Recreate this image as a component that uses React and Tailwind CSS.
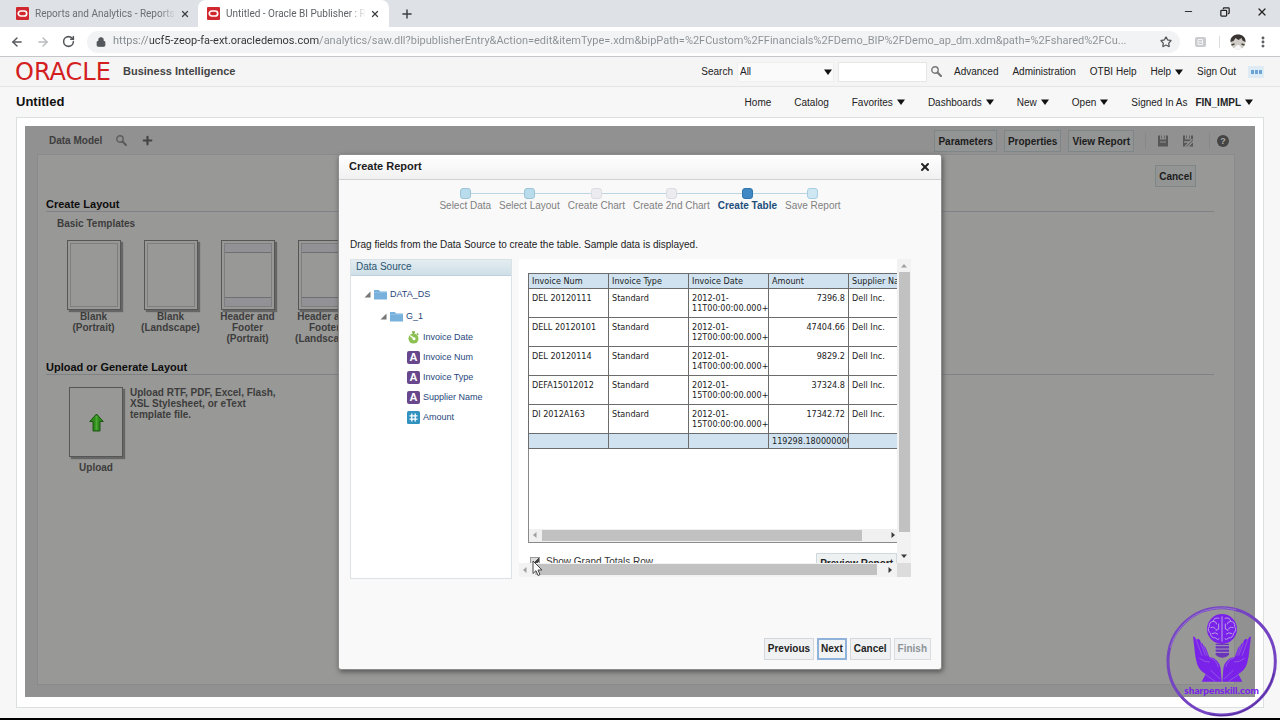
import React from "react";
import { ArrowLeft, ArrowRight, RotateCw, Lock, Star, X, Plus, Minus, Copy, MoreVertical } from "lucide-react";

const URL_TEXT =
  "https://ucf5-zeop-fa-ext.oracledemos.com/analytics/saw.dll?bipublisherEntry&Action=edit&itemType=.xdm&bipPath=%2FCustom%2FFinancials%2FDemo_BIP%2FDemo_ap_dm.xdm&path=%2Fshared%2FCu...";

const ROWS = [
  ["DEL 20120111", "Standard", "2012-01-11T00:00:00.000+0", "7396.8", "Dell Inc."],
  ["DELL 20120101", "Standard", "2012-01-12T00:00:00.000+0", "47404.66", "Dell Inc."],
  ["DEL 20120114", "Standard", "2012-01-14T00:00:00.000+0", "9829.2", "Dell Inc."],
  ["DEFA15012012", "Standard", "2012-01-15T00:00:00.000+0", "37324.8", "Dell Inc."],
  ["DI 2012A163", "Standard", "2012-01-15T00:00:00.000+0", "17342.72", "Dell Inc."],
];

const STEPS = [
  ["Select Data", "done"],
  ["Select Layout", "done"],
  ["Create Chart", "idle"],
  ["Create 2nd Chart", "idle"],
  ["Create Table", "current"],
  ["Save Report", "next"],
];

const NODE = {
  done: "border-[#9cc4d8] bg-[#b9dcec]",
  idle: "border-[#dcdce2] bg-[#ececf0]",
  current: "border-[#2f74ac] bg-[#3f88c3]",
  next: "border-[#a9cfe4] bg-[#cfe6f3]",
};

function Favicon() {
  return (
    <svg className="h-[13px] w-[13px] shrink-0" viewBox="0 0 13 13" aria-hidden="true">
      <rect width="13" height="13" rx="1" fill="#d0282e" />
      <rect x="2.3" y="4" width="8.4" height="5" rx="2.5" fill="none" stroke="#fff" strokeWidth="1.7" />
    </svg>
  );
}

function Tab({ title, active }) {
  return (
    <div
      className={
        active
          ? "flex h-[27px] w-[191px] items-center rounded-t-lg bg-white px-[9px] text-[#5f6368]"
          : "flex h-[27px] w-[198px] items-center pl-4 pr-2 text-[#6b6f75]"
      }
    >
      <Favicon />
      <span className="ml-[6px] min-w-0 flex-1 overflow-hidden whitespace-nowrap [mask-image:linear-gradient(90deg,#000_88%,transparent)]">
        {title}
      </span>
      <button aria-label="Close tab" className="ml-1">
        <X className="h-[10px] w-[10px] text-[#3c4043]" strokeWidth={3} />
      </button>
    </div>
  );
}

function Magnifier() {
  return (
    <svg className="h-[11px] w-[11px]" viewBox="0 0 11 11" fill="none" stroke="currentColor" aria-hidden="true">
      <circle cx="4" cy="4" r="3.2" strokeWidth="1.4" />
      <path d="M6.500 6.500L10 10" strokeWidth="2.200" strokeLinecap="round" />
    </svg>
  );
}

function Caret() {
  return (
    <svg className="h-[6px] w-2 shrink-0" viewBox="0 0 8 6" aria-hidden="true">
      <path d="M0 0.500h8L4 6z" fill="#111" />
    </svg>
  );
}

function NavMenu({ label, bold }) {
  return (
    <button className={bold ? "flex items-center gap-1 font-bold" : "flex items-center gap-1"}>
      {label}
      <Caret />
    </button>
  );
}

function DarkButton({ children }) {
  return (
    <button className="h-[22px] border border-[#7f8688] bg-[#939494] px-[3px] font-bold text-[#1c1c1c]">{children}</button>
  );
}

function Template({ lines, banded }) {
  return (
    <button className="flex w-[77px] shrink-0 flex-col items-center gap-[1px] font-bold leading-[11px] text-[#3d3d3d]">
      <span className="flex h-[70px] w-[54px] border border-[#565656] p-[2px] shadow-[2px_2px_1px_#666]">
        <span className="flex flex-1 flex-col justify-between border border-[#7e7e7e]">
          {banded && <span className="h-[9px] border-b border-[#6d6d72] bg-[#929296]" />}
          {banded && <span className="h-[9px] border-t border-[#6d6d72] bg-[#929296]" />}
        </span>
      </span>
      <span>
        {lines.map((l) => (
          <span key={l} className="block whitespace-nowrap">
            {l}
          </span>
        ))}
      </span>
    </button>
  );
}

function SaveIcon({ edit }) {
  return (
    <svg className="h-3 w-3" viewBox="0 0 12 12" aria-hidden="true">
      <path d="M1 0.500h2v4h6v-4h2V11.500H1z" fill="#565656" />
      <path d="M4 0.500h1v3H4zM7 0.500h1v3H7z" fill="#666" />
      {edit ? (
        <path d="M3 11.500L10.500 4M5.500 12L12 5.500M2 7h5" stroke="#929292" strokeWidth="1.300" />
      ) : (
        <path d="M3 7h6" stroke="#929292" strokeWidth="1" />
      )}
    </svg>
  );
}

function Folder() {
  return (
    <svg className="h-[11px] w-[13px] shrink-0" viewBox="0 0 13 11" aria-hidden="true">
      <path d="M0 1h5l1 1.500h7V10.500H0z" fill="#78b1dc" />
      <path d="M0 3.500h13" stroke="#8fc0e6" strokeWidth="0.800" />
    </svg>
  );
}

function Twisty() {
  return (
    <svg className="h-[7px] w-[7px] shrink-0" viewBox="0 0 7 7" aria-hidden="true">
      <path d="M6.500 0.500v6h-6z" fill="#777" />
    </svg>
  );
}

function FieldIcon({ kind }) {
  if (kind === "date")
    return (
      <svg className="h-[13px] w-[13px] shrink-0" viewBox="0 0 13 13" aria-hidden="true">
        <circle cx="6.500" cy="7.600" r="5" fill="#8cc152" />
        <path d="M5 0.300h3v1.400H7.200v1.300H5.800V1.700H5zM10.400 1.900l1.400 1.300-1 1.100-1.400-1.300z" fill="#7cb043" />
        <path d="M3.800 5l3 2.500" stroke="#fff" strokeWidth="1.500" strokeLinecap="round" />
        <circle cx="7" cy="7.800" r="1.500" fill="#fff" />
      </svg>
    );
  if (kind === "num")
    return (
      <svg className="h-[13px] w-[13px] shrink-0" viewBox="0 0 13 13" aria-hidden="true">
        <rect width="13" height="13" rx="1.500" fill="#3292bf" />
        <path d="M4.800 2.500v8M8.200 2.500v8M2.500 4.800h8M2.500 8.200h8" stroke="#fff" strokeWidth="1.300" />
      </svg>
    );
  return (
    <span className="flex h-[13px] w-[13px] shrink-0 items-center justify-center rounded-[2px] bg-[#68478c] text-[11px] font-bold leading-none text-white">
      A
    </span>
  );
}

function Field({ kind, children }) {
  return (
    <li className="flex h-5 items-center gap-[3px] pl-14">
      <FieldIcon kind={kind} />
      {children}
    </li>
  );
}

function Arrow({ dir, faint }) {
  const d = {
    left: "M5.500 1v6L2 4z",
    right: "M2.500 1v6L6 4z",
    up: "M1 5.500h6L4 2z",
    down: "M1 2.500h6L4 6z",
  }[dir];
  return (
    <svg className="h-2 w-2 shrink-0" viewBox="0 0 8 8" aria-hidden="true">
      <path d={d} fill={faint ? "#a0a0a0" : "#3a3a3a"} />
    </svg>
  );
}

function PreviewTable() {
  const cell = "overflow-hidden border border-[#6c6c6c] px-[3px] text-left font-normal";
  return (
    <table className="w-[481px] table-fixed border-collapse">
      <thead>
        <tr className="h-[15px] bg-[#d0e2f0]">
          {["Invoice Num", "Invoice Type", "Invoice Date", "Amount", "Supplier Name", ""].map((h, i) => (
            <th key={i} className={`${cell} whitespace-nowrap`}>
              {h}
            </th>
          ))}
        </tr>
      </thead>
      <tbody>
        {ROWS.map((r) => (
          <tr key={r[0]} className="h-[29px] align-top">
            <td className={`${cell} pt-1`}>{r[0]}</td>
            <td className={`${cell} pt-1`}>{r[1]}</td>
            <td className={`${cell} pt-1`}>
              <span className="block">{r[2].slice(0, 8)}</span>
              <span className="block w-0 whitespace-nowrap">{r[2].slice(8)}</span>
            </td>
            <td className={`${cell} pt-1`}>
              <span className="block text-right">{r[3]}</span>
            </td>
            <td className={`${cell} pt-1`}>{r[4]}</td>
            <td className={cell} />
          </tr>
        ))}
        <tr className="h-[15px] bg-[#d0e2f0]">
          <td className={cell} />
          <td className={cell} />
          <td className={cell} />
          <td className={cell}>119298.1800000000</td>
          <td className={cell} />
          <td className={cell} />
        </tr>
      </tbody>
    </table>
  );
}

function FooterButton({ children, focus, disabled }) {
  return (
    <button
      disabled={disabled}
      className={
        focus
          ? "h-[22px] border-2 border-[#8fb2da] bg-[#f1f3f5] px-[2px] font-bold text-[#222]"
          : disabled
            ? "h-[22px] border border-[#d9dde0] bg-[#f1f2f3] px-[3px] font-bold text-[#8d9499]"
            : "h-[22px] border border-[#d3d8dc] bg-[#eff1f2] px-[3px] font-bold text-[#222]"
      }
    >
      {children}
    </button>
  );
}

function Dialog() {
  return (
    <section
      role="dialog"
      aria-label="Create Report"
      className="flex h-[516px] w-[604px] flex-col rounded-[3px] border border-[#8d8d8d] bg-[#f9f9f9] shadow-[1px_2px_5px_#555]"
    >
      <header className="flex h-[25px] shrink-0 items-center justify-between rounded-t-[3px] border-b border-[#cfd2d4] bg-linear-to-b from-white to-[#f1f1f1] px-[10px]">
        <h2 className="text-[11px] font-bold text-[#1c1c1c]">Create Report</h2>
        <button aria-label="Close">
          <X className="h-3 w-3 text-[#222]" strokeWidth={4} />
        </button>
      </header>

      <ol className="flex justify-center pt-2 text-[#7f7f7f]">
        {STEPS.map(([label, state], i) => (
          <li key={label} className="flex flex-col items-center">
            <span className="flex w-full items-center">
              <span className={i === 0 ? "h-px flex-1" : "h-px flex-1 bg-[#bcd5e2]"} />
              <span className={`h-[11px] w-[11px] rounded-[3px] border ${NODE[state]}`} />
              <span className={i === STEPS.length - 1 ? "h-px flex-1" : "h-px flex-1 bg-[#bcd5e2]"} />
            </span>
            <span
              className={
                state === "current"
                  ? "px-1 leading-[14px] font-bold text-[#1c4d7c]"
                  : "px-1 leading-[14px]"
              }
            >
              {label}
            </span>
          </li>
        ))}
      </ol>

      <p className="mt-[25px] pl-[11px] leading-[14px] text-[#222]">
        Drag fields from the Data Source to create the table. Sample data is displayed.
      </p>

      <div className="mt-[7px] flex gap-[7px] px-[11px]">
        <div className="h-[320px] w-[162px] border border-[#dbe2e6] bg-white">
          <h3 className="flex h-4 items-center border-b border-[#bccfda] bg-linear-to-b from-[#e3edf2] to-[#cfdfe7] pl-[5px] leading-[14px] text-[#2a5470]">
            Data Source
          </h3>
          <ul className="pt-2 text-[9px] text-[#28477c]">
            <li className="flex h-[22px] items-center gap-[3px] pl-[13px]">
              <Twisty />
              <Folder />
              DATA_DS
            </li>
            <li className="flex h-[22px] items-center gap-[3px] pl-[29px]">
              <Twisty />
              <Folder />
              G_1
            </li>
            <Field kind="date">Invoice Date</Field>
            <Field kind="text">Invoice Num</Field>
            <Field kind="text">Invoice Type</Field>
            <Field kind="text">Supplier Name</Field>
            <Field kind="num">Amount</Field>
          </ul>
        </div>

        <div className="relative flex h-[318px] w-[392px] flex-col">
          <div className="flex min-h-0 flex-1">
            <div className="min-w-0 flex-1 overflow-hidden bg-white pl-[9px] pt-[14px]">
              <div className="flex h-[270px] flex-col justify-between border-b border-l border-[#8a8a8a]">
                <div className="-ml-px overflow-hidden font-['DejaVu_Sans_Condensed','DejaVu_Sans',sans-serif] text-[9px] leading-[10px] text-[#222]">
                  <PreviewTable />
                </div>
                <div className="flex h-[13px] items-center bg-[#f0f0f0] pl-[2px]">
                  <Arrow dir="left" faint />
                  <span className="ml-[3px] h-[11px] w-[320px] bg-[#c1c1c1]" />
                  <span className="flex-1" />
                  <Arrow dir="right" />
                </div>
              </div>
              <div className="flex items-start justify-between pt-[10px]">
                <label className="flex items-center gap-[6px] pl-[2px] pt-[2px] leading-[14px] text-[#333]">
                  <input
                    type="checkbox"
                    defaultChecked
                    className="h-[10px] w-[10px] appearance-none border border-[#999] bg-[linear-gradient(135deg,#ddd_50%,#444_50%,#444_75%,#ddd_75%)]"
                  />
                  Show Grand Totals Row
                </label>
                <button className="h-[22px] border border-[#cfd8dc] bg-[#eef1f2] px-[3px] font-bold text-[#222]">
                  Preview Report
                </button>
              </div>
            </div>
            <div className="flex w-[14px] flex-col items-center bg-[#f2f2f2] pb-[3px] pt-[3px]">
              <Arrow dir="up" faint />
              <span className="mt-[2px] h-[260px] w-[11px] bg-[#c1c1c1]" />
              <span className="flex-1" />
              <Arrow dir="down" />
            </div>
          </div>
          <div className="flex h-[14px] items-center bg-[#f2f2f2]">
            <span className="flex flex-1 items-center pl-[2px] pr-[3px]">
              <Arrow dir="left" faint />
              <span className="ml-[6px] h-[11px] w-[342px] bg-[#c1c1c1]" />
              <span className="flex-1" />
              <Arrow dir="right" />
            </span>
            <span className="h-[14px] w-[14px] bg-[#dcdcdc]" />
          </div>
          <svg className="absolute bottom-0 left-[13px] h-[17px] w-3" viewBox="0 0 12 17" aria-hidden="true">
            <path d="M1 1v12.500l3-2.800 2 4.800 2-.900-2-4.600h4z" fill="#fff" stroke="#444" strokeWidth="1" />
          </svg>
        </div>
      </div>

      <footer className="mt-auto flex justify-end gap-[3px] pb-[9px] pr-[10px]">
        <FooterButton>Previous</FooterButton>
        <FooterButton focus>Next</FooterButton>
        <FooterButton>Cancel</FooterButton>
        <FooterButton disabled>Finish</FooterButton>
      </footer>
    </section>
  );
}

function Hand() {
  return (
    <g>
      <path
        d="M131 126q6 1 10 10l6-3q6 3 8 12 5 0 8 9 6 2 9 13l8 22q13-1 20 8 12 10 14 26l3 39h-60l12-23q-20-12-26-31-6-20-8-48z"
        fill="#7a22ea"
      />
      <path
        d="M141 138l17 46M154 146l14 38M163 156l11 28M150 192q16 12 32 11M182 190q20 8 25 28M168 241l30 20M184 228l28 26"
        stroke="#9a70d8"
        strokeWidth="2"
        fill="none"
      />
    </g>
  );
}

function Watermark() {
  return (
    <svg className="absolute bottom-[3px] right-[3px] h-[111px] w-[111px]" viewBox="50 35 333 333" role="img" aria-label="sharpenskill.com">
      <circle cx="217" cy="201" r="161" fill="none" stroke="#7544c2" strokeWidth="9" />
      <path d="M63 160A161 161 0 0 1 260 46" fill="none" stroke="#9877cf" strokeWidth="3" />
      <path d="M374 235A161 161 0 0 1 180 360" fill="none" stroke="#4e2a94" strokeWidth="3" />
      <circle cx="218" cy="104" r="45" fill="#7a22ea" />
      <path
        d="M218 66v76M210 72q-16-4-18 9-14 2-12 16-8 11 4 20 0 14 15 14 6 8 11 2M226 72q16-4 18 9 14 2 12 16 8 11-4 20 0 14-15 14-6 8-11 2M192 81q10 1 10 9M184 100q12-4 14 5M188 118q10-6 18 2M208 88v16q-8 0-8 6M244 81q-10 1-10 9M252 100q-12-4-14 5M248 118q-10-6-18 2M228 88v16q8 0 8 6"
        stroke="#b9a0e2"
        strokeWidth="3"
        fill="none"
      />
      <path d="M199 148h40v32q-3 9-20 10-17-1-20-10z" fill="#6b35ba" />
      <path d="M197 154h44M197 164h44M197 174h44" stroke="#a79bbb" strokeWidth="3" />
      <Hand />
      <g transform="translate(436 0) scale(-1 1)">
        <Hand />
      </g>
      <text x="217" y="298" textAnchor="middle" fill="#7a22ea" fontFamily="Lato, sans-serif" fontWeight="900" fontSize="30">
        sharpenskill.com
      </text>
    </svg>
  );
}

export default function App() {
  return (
    <div className="relative flex min-h-screen w-full flex-col overflow-hidden bg-[#f7f7f7] font-['Liberation_Sans',Arial,sans-serif] text-[10px] text-[#222]">
      <div className="flex h-[27px] items-center bg-[#dee1e6] font-['Roboto',sans-serif]">
        <Tab title="Reports and Analytics - Reports a" />
        <Tab title="Untitled - Oracle BI Publisher : Re" active />
        <button aria-label="New tab" className="ml-[11px]">
          <Plus className="h-[14px] w-[14px] text-[#3c4043]" strokeWidth={2.5} />
        </button>
        <div className="ml-auto flex items-center gap-[26px] pb-1 pr-3 text-[#222]">
          <button aria-label="Minimize">
            <Minus className="h-[11px] w-[11px]" />
          </button>
          <button aria-label="Restore">
            <Copy className="h-[10px] w-[10px] -scale-x-100" strokeWidth={3} />
          </button>
          <button aria-label="Close window">
            <X className="h-3 w-3" strokeWidth={2.5} />
          </button>
        </div>
      </div>

      <div className="flex h-[30px] items-center border-b border-[#c4c6c9] bg-white pl-[10px] pr-[10px] text-[#55585c]">
        <button aria-label="Back">
          <ArrowLeft className="h-[14px] w-[14px]" strokeWidth={2.5} />
        </button>
        <button aria-label="Forward" className="ml-3">
          <ArrowRight className="h-[14px] w-[14px] text-[#b9bbbe]" strokeWidth={2.5} />
        </button>
        <button aria-label="Reload" className="ml-3">
          <RotateCw className="h-[13px] w-[13px]" strokeWidth={2.8} />
        </button>
        <div className="ml-3 flex h-[22px] min-w-0 flex-1 items-center rounded-full bg-[#f1f3f4] pl-[9px] pr-2">
          <Lock className="h-[10px] w-[10px] shrink-0 fill-[#55585c]" strokeWidth={3} />
          <input
            aria-label="Address"
            defaultValue={URL_TEXT}
            className="ml-[7px] min-w-0 flex-1 bg-[linear-gradient(90deg,#80868b_37px,#303236_37px,#303236_206px,#8a8f94_206px)] bg-clip-text font-['Roboto',sans-serif] text-[11px] text-transparent outline-none"
          />
          <Star className="ml-2 h-3 w-3 shrink-0" strokeWidth={2.5} />
        </div>
        <svg className="ml-[15px] h-[10px] w-[11px]" viewBox="0 0 11 10" aria-hidden="true">
          <rect width="11" height="10" rx="2" fill="#c9cbce" />
          <path d="M3 2.500h4.500v5H3zM3 5h4.500" stroke="#f4f4f4" fill="none" />
        </svg>
        <span className="ml-[13px] h-3 w-px bg-[#dadce0]" />
        <svg className="ml-[10px] h-4 w-4" viewBox="0 0 16 16" aria-hidden="true">
          <circle cx="8" cy="8" r="7.500" fill="#cfcbc6" />
          <path d="M0.500 8C0 3 4 .5 8 .5S16 3 15.500 8l-3-1.500-1-2.500-3 2-3-2-2 3z" fill="#3a3433" />
          <path d="M4 15q4-8 8 0z" fill="#f6f6f6" />
          <path d="M1.500 11l3-1M14.500 11l-3-1" stroke="#443" strokeWidth="1.500" />
        </svg>
        <button aria-label="Browser menu" className="ml-[10px]">
          <MoreVertical className="h-[14px] w-[14px]" strokeWidth={3} />
        </button>
      </div>

      <header className="flex h-[30px] items-center border-b border-[#e4e5e6] bg-[#f5f5f5] pl-[15px] pr-4">
        <span className="w-[108px] font-['DejaVu_Sans',sans-serif] text-[24px] leading-none text-[#d3201f]">ORACLE</span>
        <span className="whitespace-nowrap text-[11px] font-bold text-[#444]">Business Intelligence</span>
        <div className="ml-auto flex items-center">
          <label htmlFor="scope">Search</label>
          <div className="relative ml-[4px] flex h-5 w-[97px] items-center border border-[#efefef] bg-[#fafafa]">
            <select id="scope" className="h-full w-full appearance-none bg-transparent pl-[2px] outline-none">
              <option>All</option>
            </select>
            <span className="pointer-events-none absolute right-[1px]">
              <Caret />
            </span>
          </div>
          <input aria-label="Search text" className="ml-1 h-5 w-[89px] border border-[#e6e6e6] bg-white" />
          <button aria-label="Run search" className="ml-1 text-[#777]">
            <Magnifier />
          </button>
          <nav className="ml-3 flex items-center gap-[14px]">
            <a href="#advanced">Advanced</a>
            <a href="#administration">Administration</a>
            <a href="#otbi">OTBI Help</a>
            <NavMenu label="Help" />
            <a href="#signout">Sign Out</a>
          </nav>
          <button aria-label="More" className="ml-3 flex h-3 w-4 items-center justify-center gap-[1px] bg-[#deebf5]">
            <span className="h-1 w-[3px] bg-[#6aa4d6]" />
            <span className="h-1 w-[3px] bg-[#6aa4d6]" />
            <span className="h-1 w-[3px] bg-[#6aa4d6]" />
          </button>
        </div>
      </header>

      <div className="flex h-[30px] items-center pl-4 pr-[27px]">
        <h1 className="text-[13px] font-bold text-[#111]">Untitled</h1>
        <nav className="ml-auto flex items-center gap-[23px]">
          <a href="#home">Home</a>
          <a href="#catalog">Catalog</a>
          <NavMenu label="Favorites" />
          <NavMenu label="Dashboards" />
          <NavMenu label="New" />
          <NavMenu label="Open" />
          <span className="flex items-center gap-2">
            Signed In As
            <NavMenu label="FIN_IMPL" bold />
          </span>
        </nav>
      </div>

      <main className="mx-4 mb-[10px] flex flex-1 flex-col border border-[#dcdfe0] bg-white px-2 pb-[10px] pt-2">
        <div className="relative flex flex-1 flex-col bg-[#919191] pb-3 pl-3 pr-5">
          <div className="flex h-[28px] items-center pl-3 pr-[6px]">
            <span className="font-bold text-[#3d3d3d]">Data Model</span>
            <button aria-label="Find data model" className="ml-[14px] text-[#5c5c5c]">
              <Magnifier />
            </button>
            <button aria-label="Add" className="ml-[14px]">
              <Plus className="h-[13px] w-[13px] text-[#444]" strokeWidth={4} />
            </button>
            <div className="ml-auto flex items-center gap-[7px] pt-[2px]">
              <DarkButton>Parameters</DarkButton>
              <DarkButton>Properties</DarkButton>
              <DarkButton>View Report</DarkButton>
              <span className="ml-1 h-4 w-px bg-[#878787]" />
              <button aria-label="Save" className="ml-1">
                <SaveIcon />
              </button>
              <button aria-label="Save as" className="ml-[6px]">
                <SaveIcon edit />
              </button>
              <span className="ml-2 h-4 w-px bg-[#878787]" />
              <button
                aria-label="Help"
                className="flex h-3 w-3 items-center justify-center rounded-full bg-[#444] text-[9px] font-bold leading-none text-[#aaa]"
              >
                ?
              </button>
            </div>
          </div>

          <div className="flex flex-1 flex-col border border-[#888a8c] bg-[#989896] pl-2 pr-5">
            <div className="flex justify-end pr-[18px] pt-[10px]">
              <DarkButton>Cancel</DarkButton>
            </div>
            <h2 className="mt-[10px] border-b border-[#7f8285] text-[11px] font-bold leading-[14px] text-[#0d0d0d]">
              Create Layout
            </h2>
            <h3 className="mt-[5px] pl-[11px] font-bold leading-[14px] text-[#3d3d3d]">Basic Templates</h3>
            <div className="mt-[9px] flex items-start pl-[9px]">
              <Template lines={["Blank", "(Portrait)"]} />
              <Template lines={["Blank", "(Landscape)"]} />
              <Template lines={["Header and", "Footer", "(Portrait)"]} banded />
              <Template lines={["Header and", "Footer", "(Landscape)"]} banded />
            </div>
            <h2 className="mt-4 border-b border-[#7f8285] text-[11px] font-bold leading-[14px] text-[#0d0d0d]">
              Upload or Generate Layout
            </h2>
            <div className="mt-3 flex items-start gap-[7px] pl-[23px] font-bold leading-[11px] text-[#3d3d3d]">
              <button className="flex flex-col items-center gap-[5px]">
                <span className="flex h-[70px] w-[54px] items-center justify-center border border-[#565656] shadow-[2px_2px_1px_#666]">
                  <svg className="h-[19px] w-[15px]" viewBox="0 0 15 19" aria-hidden="true">
                    <path d="M7.5 1L14.300 8.500H11V18H4V8.500H.700z" fill="#2f8a1c" stroke="#1d5512" />
                    <path d="M7.500 3v14" stroke="#4ba833" strokeWidth="2" />
                  </svg>
                </span>
                Upload
              </button>
              <p className="w-[152px]">Upload RTF, PDF, Excel, Flash, XSL Stylesheet, or eText template file.</p>
            </div>
          </div>

          <div className="absolute inset-0 flex items-center justify-center">
            <Dialog />
          </div>
        </div>
      </main>
      <div className="h-[2px] bg-black" />
      <Watermark />
    </div>
  );
}
